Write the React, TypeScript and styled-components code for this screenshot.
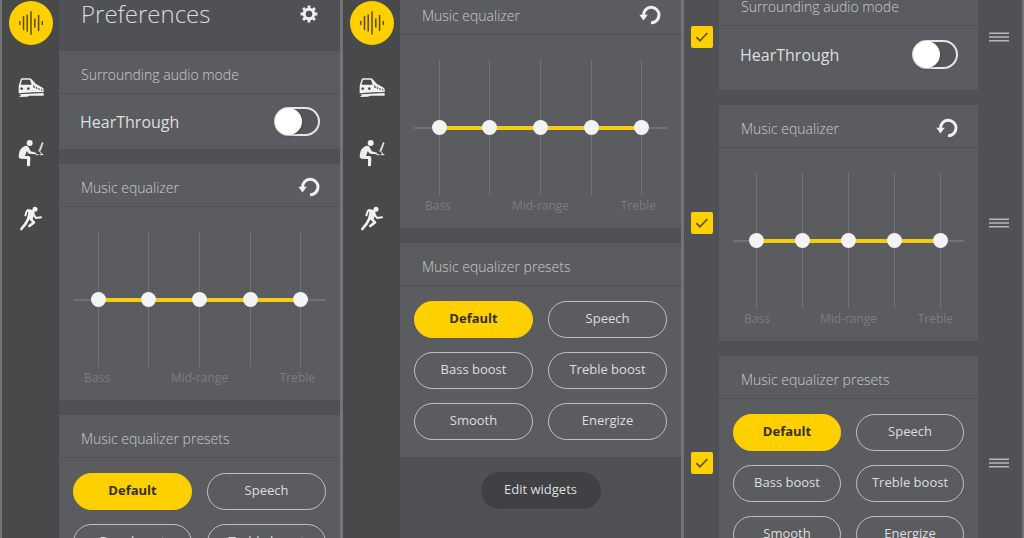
import React, { useId, useState } from "react";
import styled, { createGlobalStyle, css } from "styled-components";

const color = {
  edge: "#737476",
  rail: "#48494b",
  page: "#505155",
  card: "#5b5c5f",
  line: "#515255",
  track: "#727376",
  axis: "#86878a",
  faint: "#7c7d80",
  text: "#dededf",
  outline: "#c0c1c3",
  yellow: "#ffd000",
  ink: "#33301a",
  pill: "#404145",
};

const GlobalStyle = createGlobalStyle`
  *, *::before, *::after { box-sizing: border-box; }
  body {
    margin: 0;
    background: ${color.edge};
    color: ${color.text};
    font-family: "Open Sans", "Noto Sans", sans-serif;
    font-size: 14px;
  }
  button, input { font: inherit; margin: 0; }
`;

const Page = styled.main`
  display: grid;
  grid-template-columns: repeat(3, minmax(0, 1fr));
  gap: 3px;
  height: 100vh;
  padding: 0 2px;
  overflow: hidden;
`;

const Phone = styled.section`
  display: flex;
  min-width: 0;
  background: ${color.page};
  overflow: hidden;
`;

const Rail = styled.nav`
  flex: none;
  display: flex;
  flex-direction: column;
  align-items: center;
  gap: 21px;
  width: 57px;
  padding-top: 1px;
  background: ${color.rail};
`;

const RailButton = styled.button<{ $active?: boolean }>`
  display: grid;
  place-items: center;
  width: 44px;
  height: 44px;
  padding: 0;
  border: 0;
  border-radius: 50%;
  background: ${(p) => (p.$active ? color.yellow : "transparent")};
  color: ${(p) => (p.$active ? "#5a4d10" : "#f0f0f0")};
`;

const Content = styled.div<{ $scrolled?: number }>`
  flex: 1;
  min-width: 0;
  display: flex;
  flex-direction: column;
  gap: 15px;
  margin-top: ${(p) => -(p.$scrolled ?? 0)}px;
`;

const TitleBar = styled.header`
  flex: none;
  display: flex;
  align-items: flex-start;
  justify-content: space-between;
  height: 36px;
  padding: 0 22px;
`;

const Title = styled.h1`
  margin: 0;
  font-size: 24px;
  line-height: 27px;
  font-weight: 300;
  color: #dcdcdd;
`;

const IconButton = styled.button`
  display: flex;
  padding: 0;
  border: 0;
  background: none;
  color: #f0f0f0;
`;

const TitleIconButton = styled(IconButton)`
  height: 27px;
  align-items: center;
`;

const Card = styled.section`
  flex: none;
  min-width: 0;
  background: ${color.card};
`;

const CardHeader = styled.header`
  display: flex;
  align-items: center;
  justify-content: space-between;
  height: 43px;
  padding: 3px 20px 0 22px;
  border-bottom: 1px solid ${color.line};
`;

const CardTitle = styled.h2`
  margin: 0;
  padding-top: 2px;
  font-size: 14px;
  line-height: 20px;
  font-weight: 300;
  color: #cacbcc;
`;

const SwitchRow = styled.label<{ $roomy?: boolean }>`
  display: flex;
  align-items: center;
  justify-content: space-between;
  height: ${(p) => (p.$roomy ? 64 : 55)}px;
  padding: 0 20px ${(p) => (p.$roomy ? 7 : 0)}px 21px;
  font-size: 16px;
`;

const Switch = styled.input`
  appearance: none;
  display: flex;
  align-items: center;
  width: 46px;
  height: 29px;
  border: 2px solid #e6e6e6;
  border-radius: 15px;
  background: #555659;

  &::before {
    content: "";
    width: 27px;
    height: 27px;
    margin: 0 -1px;
    border-radius: 50%;
    background: #fff;
    box-shadow: 0 1px 3px rgba(0, 0, 0, 0.25);
  }
  &:checked {
    justify-content: flex-end;
    background: ${color.yellow};
  }
`;

const EqBody = styled.div`
  padding: 25px 14px 11px;
`;

const Bands = styled.div`
  position: relative;
  display: grid;
  grid-template-columns: repeat(5, 1fr);
  justify-items: center;
  height: 135px;

  &::before,
  &::after {
    content: "";
    position: absolute;
    top: 50%;
    transform: translateY(-50%);
  }
  &::before {
    left: 0;
    right: 0;
    height: 1px;
    background: ${color.axis};
  }
  &::after {
    left: 10%;
    right: 10%;
    height: 4px;
    background: #f5cb14;
  }
`;

const Band = styled.input`
  appearance: none;
  writing-mode: vertical-lr;
  direction: rtl;
  position: relative;
  z-index: 1;
  width: 15px;
  height: 135px;
  background: linear-gradient(${color.track}, ${color.track}) center / 1px 100% no-repeat;

  &::-webkit-slider-runnable-track {
    width: 15px;
    background: none;
  }
  &::-webkit-slider-thumb {
    appearance: none;
    width: 15px;
    height: 15px;
    border-radius: 50%;
    background: #f3f3f3;
  }
`;

const BandLabels = styled.div`
  display: grid;
  grid-template-columns: 1fr auto 1fr;
  padding: 0 11px;
  font-size: 12px;
  line-height: 22px;
  color: ${color.faint};

  span:last-child {
    text-align: right;
  }
`;

const PresetGrid = styled.div`
  display: grid;
  grid-template-columns: repeat(2, minmax(0, 1fr));
  gap: 14px 15px;
  padding: 15px 14px 17px;
`;

const pill = css`
  flex: none;
  height: 37px;
  padding: 0 0 3px;
  border-radius: 19px;
  font-size: 13px;
  white-space: nowrap;
`;

const PresetButton = styled.button<{ $active?: boolean }>`
  ${pill}
  border: 1px solid ${(p) => (p.$active ? color.yellow : color.outline)};
  background: ${(p) => (p.$active ? color.yellow : "transparent")};
  color: ${(p) => (p.$active ? color.ink : color.text)};
  font-weight: ${(p) => (p.$active ? 700 : 400)};
`;

const EditButton = styled.button`
  ${pill}
  align-self: center;
  width: 120px;
  border: 0;
  background: ${color.pill};
  color: ${color.text};
`;

const EditRow = styled.div`
  flex: none;
  display: grid;
  grid-template-columns: 35px minmax(0, 1fr) 44px;
  align-items: center;
`;

const TickBox = styled.span`
  position: relative;
  justify-self: center;
  display: grid;
  place-items: center;
  width: 22px;
  height: 22px;

  svg {
    position: absolute;
    pointer-events: none;
  }
`;

const Tick = styled.input`
  appearance: none;
  width: 22px;
  height: 22px;
  border-radius: 2px;
  background: #77787b;

  &:checked {
    background: ${color.yellow};
  }
`;

const DragHandle = styled(IconButton)`
  padding-left: 11px;
  color: #b5b6b8;
`;

const WaveIcon = () => (
  <svg width="26" height="26" viewBox="0 0 26 26" stroke="currentColor" strokeWidth="1.5" strokeLinecap="round">
    <path d="M1.8 11.5v3M5.5 6.5v13M9.2 5v16M13 1.8v22.4M16.8 9v8M20.6 5.5v15M24.3 11.5v3" />
  </svg>
);

const TrainIcon = () => (
  <svg width="26" height="20" viewBox="0 0 78 60" fill="currentColor">
    <path
      fillRule="evenodd"
      d="M8 4Q9 1 12 1H35Q38 1 41 4L53 17L74 29Q77 31 77 35V42L44 43L2 46V24ZM12 5L8 20H41L36 5ZM11 28a4 4 0 1 0 .1 0ZM31 28a4 4 0 1 0 .1 0ZM45 22l2 8h4l-3-8ZM53 26l2 7h3l-2-7ZM61 30l1 6h3l-1-6ZM69 32l1 6h3l-1-5Z"
    />
    <path d="M4 49L77 45V53L34 53L27 56L3 57L9 52Z" />
  </svg>
);

const DeskIcon = () => (
  <svg width="26" height="28" viewBox="0 0 78 84" fill="none" stroke="currentColor" strokeLinecap="round" strokeLinejoin="round">
    <circle cx="35" cy="12" r="9" fill="currentColor" stroke="none" />
    <path
      fill="currentColor"
      stroke="none"
      d="M22 20Q31 19 33 27L38 37L54 41Q57 45 52 46L33 44L26 37L21 51H32Q37 52 37 57L36 80Q32 84 27 80V60L8 59Q1 58 2 51Q3 27 22 20Z"
    />
    <path fill="currentColor" strokeWidth="1" d="M73 10L76 12L67 36L62 37Z" />
    <path strokeWidth="3" d="M54 47H60M66 47H75M66 38L72 45" />
  </svg>
);

const RunIcon = () => (
  <svg width="24" height="25" viewBox="0 0 72 75" fill="none" stroke="currentColor" strokeLinecap="round" strokeLinejoin="round">
    <circle cx="48" cy="10" r="7.5" fill="currentColor" stroke="none" />
    <path fill="currentColor" stroke="none" d="M24 10L41 12Q48 16 47 23L40 42L24 37L28 20Z" />
    <path strokeWidth="6" d="M32 13L24 14L19 28M44 26L51 36L66 34" />
    <path strokeWidth="8" d="M28 38L20 53L7 69M34 38L45 49L31 60" />
  </svg>
);

const GearIcon = () => (
  <svg width="18" height="18" viewBox="0 0 18 18" fill="none" stroke="currentColor">
    <circle cx="9" cy="9" r="4.8" strokeWidth="3" />
    <path
      strokeWidth="2.8"
      d="M9 .6v3M9 14.4v3M.6 9h3M14.4 9h3M3.1 3.1l2.1 2.1M12.8 12.8l2.1 2.1M3.1 14.9l2.1-2.1M12.8 5.2l2.1-2.1"
    />
  </svg>
);

const ResetIcon = () => (
  <svg width="22" height="20" viewBox="0 0 22 20">
    <path d="M12 17.7A7.7 7.7 0 1 0 4.6 10.5" fill="none" stroke="#f0f0f0" strokeWidth="3" />
    <path d="M.4 9.7h8.4L4.4 15.4z" fill="#f0f0f0" />
  </svg>
);

const CheckIcon = () => (
  <svg width="14" height="12" viewBox="0 0 14 12" fill="none" stroke="#5f520c" strokeWidth="1.8">
    <path d="M1.4 6.2L4.9 9.8L12.4 2" />
  </svg>
);

const GripIcon = () => (
  <svg width="20" height="10" viewBox="0 0 20 10" stroke="currentColor" strokeWidth="1.4">
    <path d="M0 1.2h20M0 5h20M0 8.8h20" />
  </svg>
);

const moments = [
  { name: "My moment", Icon: WaveIcon },
  { name: "Commute", Icon: TrainIcon },
  { name: "Focus", Icon: DeskIcon },
  { name: "Active", Icon: RunIcon },
];

const bandNames = ["Bass", "Low mid", "Mid-range", "High mid", "Treble"];
const presets = ["Default", "Speech", "Bass boost", "Treble boost", "Smooth", "Energize"];

function MomentRail() {
  const [active, setActive] = useState(0);
  return (
    <Rail aria-label="Moments">
      {moments.map(({ name, Icon }, i) => (
        <RailButton key={name} type="button" aria-label={name} $active={i === active} onClick={() => setActive(i)}>
          <Icon />
        </RailButton>
      ))}
    </Rail>
  );
}

function AudioModeCard({ roomy }: { roomy?: boolean }) {
  const id = useId();
  return (
    <Card>
      <CardHeader>
        <CardTitle>Surrounding audio mode</CardTitle>
      </CardHeader>
      <SwitchRow htmlFor={id} $roomy={roomy}>
        HearThrough
        <Switch id={id} type="checkbox" role="switch" />
      </SwitchRow>
    </Card>
  );
}

function EqualizerCard() {
  const [levels, setLevels] = useState([50, 50, 50, 50, 50]);
  return (
    <Card>
      <CardHeader>
        <CardTitle>Music equalizer</CardTitle>
        <IconButton type="button" aria-label="Reset equalizer" onClick={() => setLevels([50, 50, 50, 50, 50])}>
          <ResetIcon />
        </IconButton>
      </CardHeader>
      <EqBody>
        <Bands>
          {bandNames.map((name, i) => (
            <Band
              key={name}
              type="range"
              aria-label={name}
              value={levels[i]}
              onChange={(e) => setLevels(levels.map((v, k) => (k === i ? Number(e.target.value) : v)))}
            />
          ))}
        </Bands>
        <BandLabels>
          <span>Bass</span>
          <span>Mid-range</span>
          <span>Treble</span>
        </BandLabels>
      </EqBody>
    </Card>
  );
}

function PresetsCard() {
  const [active, setActive] = useState("Default");
  return (
    <Card>
      <CardHeader>
        <CardTitle>Music equalizer presets</CardTitle>
      </CardHeader>
      <PresetGrid>
        {presets.map((name) => (
          <PresetButton key={name} type="button" $active={name === active} onClick={() => setActive(name)}>
            {name}
          </PresetButton>
        ))}
      </PresetGrid>
    </Card>
  );
}

function EditableWidget({ name, children }: { name: string; children: React.ReactNode }) {
  return (
    <EditRow>
      <TickBox>
        <Tick type="checkbox" defaultChecked aria-label={`Show ${name}`} />
        <CheckIcon />
      </TickBox>
      {children}
      <DragHandle type="button" aria-label={`Move ${name}`}>
        <GripIcon />
      </DragHandle>
    </EditRow>
  );
}

export default function App() {
  return (
    <>
      <GlobalStyle />
      <Page>
        <Phone>
          <MomentRail />
          <Content>
            <TitleBar>
              <Title>Preferences</Title>
              <TitleIconButton type="button" aria-label="Settings">
                <GearIcon />
              </TitleIconButton>
            </TitleBar>
            <AudioModeCard />
            <EqualizerCard />
            <PresetsCard />
          </Content>
        </Phone>
        <Phone>
          <MomentRail />
          <Content $scrolled={8}>
            <EqualizerCard />
            <PresetsCard />
            <EditButton type="button">Edit widgets</EditButton>
          </Content>
        </Phone>
        <Phone>
          <Content $scrolled={17}>
            <EditableWidget name="Surrounding audio mode">
              <AudioModeCard roomy />
            </EditableWidget>
            <EditableWidget name="Music equalizer">
              <EqualizerCard />
            </EditableWidget>
            <EditableWidget name="Music equalizer presets">
              <PresetsCard />
            </EditableWidget>
          </Content>
        </Phone>
      </Page>
    </>
  );
}
